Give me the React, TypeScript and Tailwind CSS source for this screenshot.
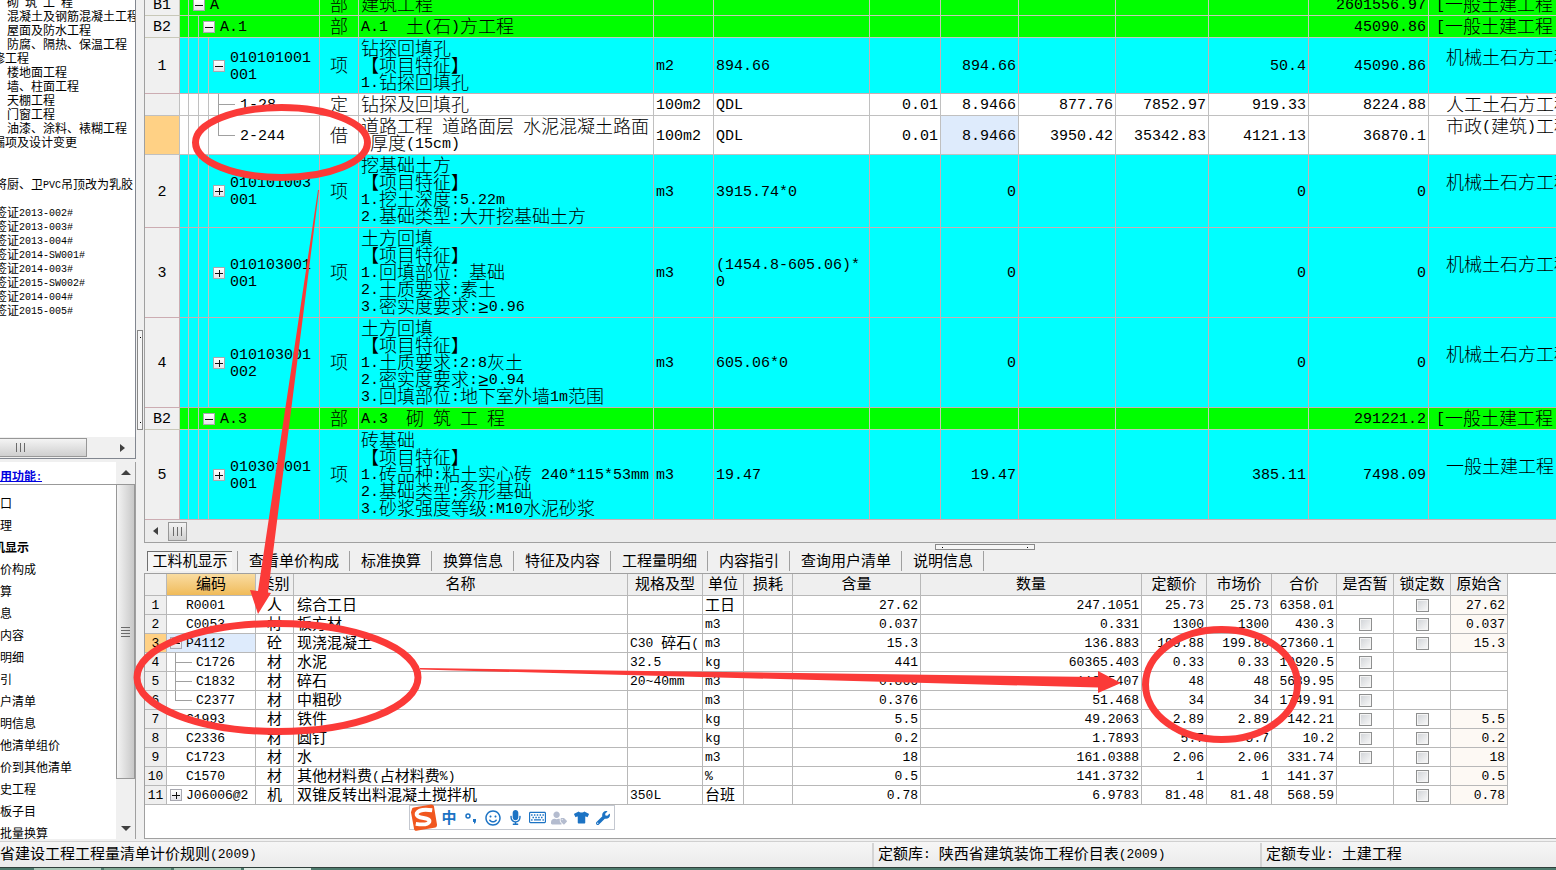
import { FaMicrophone, FaRegKeyboard, FaRegSmile, FaTshirt, FaUserTag, FaWrench } from "react-icons/fa";
import clsx from "clsx";

interface BillRow {
  no: string;
  level: number;
  open?: boolean;
  last?: boolean;
  code: string;
  kind: string;
  name: string;
  unit?: string;
  expr?: string;
  values: string[];
  major: string;
  height: string;
  selected?: boolean;
}

interface MaterialRow {
  code: string;
  depth?: number;
  open?: boolean;
  kind: string;
  name: string;
  spec?: string;
  unit: string;
  content: string;
  amount: string;
  price: string;
  total: string;
  temp: boolean;
  lock: boolean;
  origin: string;
}

const BILL_ROWS: BillRow[] = [
  { no: "B1", level: 1, open: true, code: "A", kind: "部", name: "建筑工程", values: ["", "", "", "", "", "2601556.97"], major: "[一般土建工程", height: "h-[22px]" },
  { no: "B2", level: 2, open: true, code: "A.1", kind: "部", name: "A.1  土(石)方工程", values: ["", "", "", "", "", "45090.86"], major: "[一般土建工程", height: "h-[22px]" },
  { no: "1", level: 3, open: true, code: "010101001\n001", kind: "项", name: "钻探回填孔\n【项目特征】\n1.钻探回填孔", unit: "m2", expr: "894.66", values: ["", "894.66", "", "", "50.4", "45090.86"], major: "机械土石方工程", height: "h-[56px]" },
  { no: "", level: 4, code: "1-28", kind: "定", name: "钻探及回填孔", unit: "100m2", expr: "QDL", values: ["0.01", "8.9466", "877.76", "7852.97", "919.33", "8224.88"], major: "人工土石方工程", height: "h-[22px]" },
  { no: "", level: 4, last: true, code: "2-244", kind: "借", name: "道路工程 道路面层 水泥混凝土路面\n 厚度(15cm)", unit: "100m2", expr: "QDL", values: ["0.01", "8.9466", "3950.42", "35342.83", "4121.13", "36870.1"], major: "市政(建筑)工程", height: "h-[39px]", selected: true },
  { no: "2", level: 3, open: false, code: "010101003\n001", kind: "项", name: "挖基础土方\n【项目特征】\n1.挖土深度:5.22m\n2.基础类型:大开挖基础土方", unit: "m3", expr: "3915.74*0", values: ["", "0", "", "", "0", "0"], major: "机械土石方工程", height: "h-[73px]" },
  { no: "3", level: 3, open: false, code: "010103001\n001", kind: "项", name: "土方回填\n【项目特征】\n1.回填部位: 基础\n2.土质要求:素土\n3.密实度要求:≥0.96", unit: "m3", expr: "(1454.8-605.06)*\n0", values: ["", "0", "", "", "0", "0"], major: "机械土石方工程", height: "h-[90px]" },
  { no: "4", level: 3, open: false, code: "010103001\n002", kind: "项", name: "土方回填\n【项目特征】\n1.土质要求:2:8灰土\n2.密实度要求:≥0.94\n3.回填部位:地下室外墙1m范围", unit: "m3", expr: "605.06*0", values: ["", "0", "", "", "0", "0"], major: "机械土石方工程", height: "h-[90px]" },
  { no: "B2", level: 2, open: true, code: "A.3", kind: "部", name: "A.3  砌 筑 工 程", values: ["", "", "", "", "", "291221.2"], major: "[一般土建工程", height: "h-[22px]" },
  { no: "5", level: 3, open: false, code: "010301001\n001", kind: "项", name: "砖基础\n【项目特征】\n1.砖品种:粘土实心砖 240*115*53mm\n2.基础类型:条形基础\n3.砂浆强度等级:M10水泥砂浆", unit: "m3", expr: "19.47", values: ["", "19.47", "", "", "385.11", "7498.09"], major: "一般土建工程", height: "h-[90px]" },
];

const MATERIALS: MaterialRow[] = [
  { code: "R0001", kind: "人", name: "综合工日", unit: "工日", content: "27.62", amount: "247.1051", price: "25.73", total: "6358.01", temp: false, lock: true, origin: "27.62" },
  { code: "C0053", kind: "材", name: "板方材", unit: "m3", content: "0.037", amount: "0.331", price: "1300", total: "430.3", temp: true, lock: true, origin: "0.037" },
  { code: "P4112", open: true, kind: "砼", name: "现浇混凝土", spec: "C30 碎石(", unit: "m3", content: "15.3", amount: "136.883", price: "199.88", total: "27360.1", temp: true, lock: true, origin: "15.3" },
  { code: "C1726", depth: 1, kind: "材", name: "水泥", spec: "32.5", unit: "kg", content: "441", amount: "60365.403", price: "0.33", total: "19920.5", temp: true, lock: false, origin: "" },
  { code: "C1832", depth: 1, kind: "材", name: "碎石", spec: "20~40mm", unit: "m3", content: "0.866", amount: "118.5407", price: "48", total: "5689.95", temp: true, lock: false, origin: "" },
  { code: "C2377", depth: 2, kind: "材", name: "中粗砂", unit: "m3", content: "0.376", amount: "51.468", price: "34", total: "1749.91", temp: true, lock: false, origin: "" },
  { code: "C1993", kind: "材", name: "铁件", unit: "kg", content: "5.5", amount: "49.2063", price: "2.89", total: "142.21", temp: true, lock: true, origin: "5.5" },
  { code: "C2336", kind: "材", name: "圆钉", unit: "kg", content: "0.2", amount: "1.7893", price: "5.7", total: "10.2", temp: true, lock: true, origin: "0.2" },
  { code: "C1723", kind: "材", name: "水", unit: "m3", content: "18", amount: "161.0388", price: "2.06", total: "331.74", temp: true, lock: true, origin: "18" },
  { code: "C1570", kind: "材", name: "其他材料费(占材料费%)", unit: "%", content: "0.5", amount: "141.3732", price: "1", total: "141.37", temp: false, lock: true, origin: "0.5" },
  { code: "J06006@2", open: false, kind: "机", name: "双锥反转出料混凝土搅拌机", spec: "350L", unit: "台班", content: "0.78", amount: "6.9783", price: "81.48", total: "568.59", temp: false, lock: true, origin: "0.78" },
];

const PROJECT_TREE = [
  { text: "砌 筑 工 程", indent: "ml-[7px]" },
  { text: "混凝土及钢筋混凝土工程", indent: "ml-[7px]" },
  { text: "屋面及防水工程", indent: "ml-[7px]" },
  { text: "防腐、隔热、保温工程", indent: "ml-[7px]" },
  { text: "修工程", indent: "-ml-[7px]" },
  { text: "楼地面工程", indent: "ml-[7px]" },
  { text: "墙、柱面工程", indent: "ml-[7px]" },
  { text: "天棚工程", indent: "ml-[7px]" },
  { text: "门窗工程", indent: "ml-[7px]" },
  { text: "油漆、涂料、裱糊工程", indent: "ml-[7px]" },
  { text: "漏项及设计变更", indent: "-ml-[7px]" },
  { text: "", indent: "" },
  { text: "", indent: "" },
  { text: "将厨、卫PVC吊顶改为乳胶", indent: "-ml-[5px]" },
  { text: "", indent: "" },
  { text: "签证2013-002#", indent: "-ml-[5px]" },
  { text: "签证2013-003#", indent: "-ml-[5px]" },
  { text: "签证2013-004#", indent: "-ml-[5px]" },
  { text: "签证2014-SW001#", indent: "-ml-[5px]" },
  { text: "签证2014-003#", indent: "-ml-[5px]" },
  { text: "签证2015-SW002#", indent: "-ml-[5px]" },
  { text: "签证2014-004#", indent: "-ml-[5px]" },
  { text: "签证2015-005#", indent: "-ml-[5px]" },
];

const FUNCTIONS = ["口", "理", "机显示", "价构成", "算", "息", "内容", "明细", "引", "户清单", "明信息", "他清单组价", "价到其他清单", "史工程", "板子目", "批量换算"];

const TABS = ["查看单价构成", "标准换算", "换算信息", "特征及内容", "工程量明细", "内容指引", "查询用户清单", "说明信息"];

const MATERIAL_HEADS = ["编码", "类别", "名称", "规格及型", "单位", "损耗", "含量", "数量", "定额价", "市场价", "合价", "是否暂", "锁定数", "原始含"];

// Chinese runs are set one step larger than the Latin ones so that one hanzi spans two columns
const SIZES = {
  lg: { base: "text-[15px]", han: "text-[18px] align-[-2px] font-light" },
  md: { base: "text-[13px]", han: "text-[15px] align-[-1px]" },
  sm: { base: "text-[10px]", han: "text-[12px] align-[-1px]" },
};

function Txt({ children, size = "md" }: { children: string; size?: keyof typeof SIZES }) {
  const s = SIZES[size];
  return (
    <span className={clsx("whitespace-pre", s.base)}>
      {children.split(/([\u2010-\uffff]+)/).map((run, i) =>
        i % 2 ? (
          <span key={i} className={clsx("leading-0", s.han)}>{run}</span>
        ) : (
          run
        )
      )}
    </span>
  );
}

function Expander({ open }: { open: boolean }) {
  return (
    <button
      aria-label={open ? "折叠" : "展开"}
      className="flex h-3 w-3 shrink-0 items-center justify-center border border-[#a8a8b0] bg-gradient-to-b from-white to-[#e4e4ea]"
    >
      <svg width="8" height="8" viewBox="0 0 8 8" stroke="#111" strokeWidth="1" shapeRendering="crispEdges">
        <path d={open ? "M0 4.5h8" : "M0 4.5h8M4.5 1v7"} />
      </svg>
    </button>
  );
}

function BillCode({ row }: { row: BillRow }) {
  const guides = Math.min(row.level, 3);
  return (
    <div className="flex h-full items-stretch">
      <div className="w-[9px] shrink-0 border-r border-[#c0c0c0]" />
      {guides > 1 && <div className="w-[10px] shrink-0 border-r border-[#c0c0c0]" />}
      {guides > 2 && <div className="w-[10px] shrink-0 border-r border-[#c0c0c0]" />}
      {row.level === 4 ? (
        <div className="flex w-[26px] shrink-0 flex-col pl-[9px]">
          <div className="flex-1 border-b border-l border-[#a0a0a0]" />
          <div className={clsx("flex-1", !row.last && "border-l border-[#a0a0a0]")} />
        </div>
      ) : (
        <div className="flex w-4 shrink-0 items-center pl-1">
          <Expander open={!!row.open} />
        </div>
      )}
      <div className="flex items-center pl-[5px] pt-0.5">
        <Txt size="lg">{row.code}</Txt>
      </div>
    </div>
  );
}

function BillTable() {
  return (
    <table className="-mt-[6px] w-full table-fixed border-separate border-spacing-0 text-[15px] leading-[17px]">
      <colgroup>
        <col className="w-[35px]" />
        <col className="w-[140px]" />
        <col className="w-[39px]" />
        <col className="w-[295px]" />
        <col className="w-[60px]" />
        <col className="w-[156px]" />
        <col className="w-[71px]" />
        <col className="w-[78px]" />
        <col className="w-[97px]" />
        <col className="w-[93px]" />
        <col className="w-[100px]" />
        <col className="w-[120px]" />
        <col />
      </colgroup>
      <tbody>
        {BILL_ROWS.map((row, i) => {
          const line = clsx(
            "overflow-hidden border-b",
            row.level < 3 ? "border-[#c8c8b8]" : row.level === 3 ? "border-[#ccacb2]" : "border-[#c0c0c0]",
            row.height
          );
          const fill = row.level < 3 ? "bg-[#00ff00]" : row.level === 3 ? "bg-[#00ffff]" : "bg-white";
          const cell = clsx(line, "border-r px-0 pb-0 pt-0.5");
          return (
            <tr key={i}>
              <th className={clsx(cell, "font-normal", row.selected ? "bg-[#ffd185]" : "bg-[#f0f0f0]")}>{row.no}</th>
              <td className={clsx(line, fill, "border-r p-0")}><BillCode row={row} /></td>
              <td className={clsx(cell, fill, "text-center")}><Txt size="lg">{row.kind}</Txt></td>
              <td className={clsx(cell, fill, "pl-0.5")}><Txt size="lg">{row.name}</Txt></td>
              <td className={clsx(cell, fill, "pl-0.5")}><Txt size="lg">{row.unit ?? ""}</Txt></td>
              <td className={clsx(cell, fill, "pl-0.5")}><Txt size="lg">{row.expr ?? ""}</Txt></td>
              {row.values.map((v, j) => (
                <td key={j} className={clsx(cell, "pr-0.5 text-right", row.selected && j === 1 ? "bg-[#deebfc]" : fill)}>{v}</td>
              ))}
              <td className={clsx(line, fill, "pb-0 pr-0 pt-0.5", row.level < 3 ? "pl-[7px]" : "pl-[17px]")}>
                <Txt size="lg">{row.level < 3 || row.height === "h-[22px]" ? row.major : row.major + "\n "}</Txt>
              </td>
            </tr>
          );
        })}
      </tbody>
    </table>
  );
}

function MaterialCode({ row }: { row: MaterialRow }) {
  if (row.depth) {
    return (
      <div className="flex h-[18px] pl-2">
        <div className="flex w-[17px] flex-col">
          <div className="flex-1 border-b border-l border-[#a0a0a0]" />
          <div className={clsx("flex-1", row.depth === 1 && "border-l border-[#a0a0a0]")} />
        </div>
        <span className="pl-1 pt-0.5">{row.code}</span>
      </div>
    );
  }
  return (
    <div className="flex h-[18px] items-center pl-[3px]">
      {row.open !== undefined ? <Expander open={row.open} /> : <div className="w-3" />}
      <span className="pl-1 pt-0.5">{row.code}</span>
    </div>
  );
}

function Check({ label }: { label: string }) {
  return (
    <input
      type="checkbox"
      aria-label={label}
      className="mx-auto block h-[13px] w-[13px] appearance-none border border-[#8e8f8f] bg-gradient-to-br from-[#cfd2d6] to-[#fafafa] shadow-[inset_0_0_0_1px_#f4f4f4]"
    />
  );
}

function MaterialTable() {
  const line = "h-[19px] overflow-hidden whitespace-nowrap border-b border-r border-[#b8b8b8]";
  const bare = clsx(line, "p-0");
  const cell = clsx(line, "px-0 pb-0 pt-0.5");
  const num = clsx(line, "pb-0 pl-0 pr-0.5 pt-0.5 text-right");
  return (
    <table className="w-[1363px] table-fixed border-separate border-spacing-0 text-[13px] leading-[16px]">
      <colgroup>
        <col className="w-[22px]" />
        <col className="w-[89px]" />
        <col className="w-[38px]" />
        <col className="w-[334px]" />
        <col className="w-[75px]" />
        <col className="w-[41px]" />
        <col className="w-[49px]" />
        <col className="w-[128px]" />
        <col className="w-[221px]" />
        <col className="w-[65px]" />
        <col className="w-[65px]" />
        <col className="w-[65px]" />
        <col className="w-[57px]" />
        <col className="w-[57px]" />
        <col className="w-[57px]" />
      </colgroup>
      <thead>
        <tr className="bg-[#efefef]">
          <th className="h-[22px] border-b border-r border-[#b8b8b8]" />
          {MATERIAL_HEADS.map((head, i) => (
            <th
              key={head}
              className={clsx(
                "overflow-hidden whitespace-nowrap border-b border-r border-[#b8b8b8] p-0 font-normal",
                i === 0 && "bg-gradient-to-b from-[#f9dca0] to-[#f0bb58]"
              )}
            >
              <Txt>{head}</Txt>
            </th>
          ))}
        </tr>
      </thead>
      <tbody>
        {MATERIALS.map((row, i) => (
          <tr key={row.code}>
            <th className={clsx(cell, "font-normal", i === 2 ? "bg-[#ffd185]" : "bg-[#efefef]")}>{i + 1}</th>
            <td className={clsx(bare, i === 2 && "bg-[#deebfc]")}><MaterialCode row={row} /></td>
            <td className={clsx(cell, "text-center")}><Txt>{row.kind}</Txt></td>
            <td className={clsx(cell, "pl-[3px]")}><Txt>{row.name}</Txt></td>
            <td className={clsx(cell, "pl-0.5")}><Txt>{row.spec ?? ""}</Txt></td>
            <td className={clsx(cell, "pl-0.5")}><Txt>{row.unit}</Txt></td>
            <td className={bare} />
            <td className={num}>{row.content}</td>
            <td className={num}>{row.amount}</td>
            <td className={num}>{row.price}</td>
            <td className={num}>{row.price}</td>
            <td className={num}>{row.total}</td>
            <td className={bare}>{row.temp && <Check label="是否暂估" />}</td>
            <td className={bare}>{row.lock && <Check label="锁定数量" />}</td>
            <td className={clsx(num, row.origin && "bg-[#fdf9f4]")}>{row.origin}</td>
          </tr>
        ))}
      </tbody>
    </table>
  );
}

function Arrow({ dir }: { dir: "left" | "right" | "up" | "down" }) {
  const d = {
    left: "M7 1v8L2 5z",
    right: "M3 1v8l5-4z",
    up: "M0 7h10L5 2z",
    down: "M0 3h10L5 8z",
  }[dir];
  return (
    <svg width="10" height="10" viewBox="0 0 10 10" fill="#404040">
      <path d={d} />
    </svg>
  );
}

function Grip({ vertical }: { vertical?: boolean }) {
  return (
    <svg width="11" height="11" viewBox="0 0 11 11" stroke="#6a6a6a" shapeRendering="crispEdges">
      <path d={vertical ? "M1 1.5h9M1 4.5h9M1 7.5h9M1 10.5h9" : "M1.5 1v9M5.5 1v9M9.5 1v9"} />
    </svg>
  );
}

function Sidebar() {
  return (
    <aside className="flex w-[136px] shrink-0 flex-col gap-[3px] overflow-hidden">
      <div className="flex h-[459px] shrink-0 flex-col overflow-hidden border-b border-r border-[#828790] bg-white">
        <ul className="-mt-[3px] flex-1 text-[10px] leading-[14px]">
          {PROJECT_TREE.map((node, i) => (
            <li key={i} className={clsx("h-[14px] whitespace-nowrap", node.indent)}>
              <Txt size="sm">{node.text}</Txt>
            </li>
          ))}
        </ul>
        <div className="flex h-[21px] items-center bg-[#f0f0f0]">
          <div className="flex h-[19px] w-[87px] items-center border border-l-0 border-[#979797] bg-gradient-to-b from-[#f4f4f4] to-[#cfcfcf] pl-[15px]">
            <Grip />
          </div>
          <button aria-label="向右" className="ml-auto pr-2"><Arrow dir="right" /></button>
        </div>
      </div>

      <div className="flex min-h-0 flex-1 border-r border-[#a0a0a0] bg-white">
        <nav className="min-w-0 flex-1 overflow-hidden text-[10px] leading-[22px]">
          <h2 className="h-[23px] border-b border-[#999] pt-[6px] font-bold leading-[20px] text-[#0000e0] underline">
            <Txt size="sm">用功能:</Txt>
          </h2>
          <ul className="pt-[9px]">
            {FUNCTIONS.map((name) => (
              <li key={name} className={clsx("h-[22px] whitespace-nowrap", name === "机显示" && "-ml-[7px] font-bold")}>
                <a href="#"><Txt size="sm">{name}</Txt></a>
              </li>
            ))}
          </ul>
        </nav>
        <div className="flex w-[19px] flex-col items-center bg-[#f0f0f0]">
          <button aria-label="向上" className="flex h-[22px] items-center"><Arrow dir="up" /></button>
          <div className="flex h-[295px] w-full items-center justify-center border border-[#979797] bg-gradient-to-r from-[#f4f4f4] to-[#c8c8c8]">
            <Grip vertical />
          </div>
          <button aria-label="向下" className="mt-auto flex h-[22px] items-center"><Arrow dir="down" /></button>
        </div>
      </div>
    </aside>
  );
}

function ImeBar() {
  return (
    <div className="absolute left-[264px] top-[231px] flex h-[25px] items-center border border-[#c4c8d0] bg-white text-[#1c73c4]">
      <svg className="-my-1 block" width="28" height="28" viewBox="0 0 29 28">
        <path d="M2 5 Q2 3 4 3 L22 0 Q25 0 25 3 L28 21 Q28 24 25 24 L8 27 Q4 28 4 24 L1 8Z" fill="#f1571f" />
        <path d="M23 6 Q10 4 7 9 Q6 13 14 14 Q21 15 20 18 Q18 22 6 20" fill="none" stroke="#fff" strokeWidth="4" />
      </svg>
      <button className="w-[22px] font-['Noto_Sans_CJK_SC',sans-serif] text-[15px] font-bold">中</button>
      <button aria-label="标点" className="flex w-[22px] justify-center">
        <svg width="14" height="14" viewBox="0 0 14 14">
          <circle cx="4" cy="5" r="2" fill="none" stroke="currentColor" strokeWidth="1.5" />
          <path d="M9 8h3v2q0 2-2 3v-2H9z" fill="currentColor" />
        </svg>
      </button>
      <button aria-label="表情" className="flex w-[22px] justify-center"><FaRegSmile size={16} /></button>
      <button aria-label="语音" className="flex w-[22px] justify-center"><FaMicrophone size={15} /></button>
      <button aria-label="软键盘" className="flex w-[22px] justify-center"><FaRegKeyboard size={17} /></button>
      <button aria-label="账户" className="flex w-[22px] justify-center text-[#b4bccf]"><FaUserTag size={16} /></button>
      <button aria-label="皮肤" className="flex w-[22px] justify-center"><FaTshirt size={15} /></button>
      <button aria-label="设置" className="flex w-[22px] justify-center"><FaWrench size={14} /></button>
    </div>
  );
}

function Annotations() {
  return (
    <svg className="pointer-events-none absolute inset-0 h-full w-full" fill="none" stroke="#fb3a38" strokeWidth="7">
      <ellipse cx="281.5" cy="142.5" rx="86" ry="35" />
      <ellipse cx="277.5" cy="677.5" rx="140.5" ry="54" />
      <ellipse cx="1221.5" cy="684.5" rx="76" ry="55" />
      <g fill="#fb3a38" stroke="none">
        <path d="M318 190h1L268 592.500l3 .5L258 614l-8-24 8 1z" />
        <path d="M420 668L1098 677v-6l23 12-23 10v-5.500L420 669.500z" />
      </g>
    </svg>
  );
}

export default function App() {
  return (
    <div className="relative flex h-screen flex-col overflow-hidden bg-[#f0f0f0] font-['Liberation_Mono','Noto_Sans_CJK_SC',monospace] text-black">
      <div className="flex min-h-0 flex-1">
        <Sidebar />
        <div className="w-2 shrink-0 px-px pt-[330px]">
          <div className="flex h-[100px] flex-col items-center justify-between border border-[#888] bg-[#f6f6f6] py-1.5">
            <span className="h-px w-px bg-black" />
            <span className="h-px w-px bg-black" />
          </div>
        </div>

        <main className="flex min-w-0 flex-1 flex-col">
          <section className="shrink-0 overflow-hidden border-b border-l border-[#a0a0a0]">
            <BillTable />
            <div className="flex h-[22px] items-center bg-[#ececec] pl-[6px]">
              <button aria-label="向左"><Arrow dir="left" /></button>
              <div className="ml-[7px] flex h-[19px] w-[19px] items-center justify-center border border-[#979797] bg-gradient-to-b from-[#f4f4f4] to-[#cfcfcf]">
                <Grip />
              </div>
            </div>
          </section>

          <div className="flex h-2 shrink-0 items-center">
            <div className="ml-[56%] flex h-1.5 w-[100px] items-center justify-between border border-[#888] bg-[#f6f6f6] px-1.5">
              <span className="h-px w-px bg-black" />
              <span className="h-px w-px bg-black" />
            </div>
          </div>

          <div className="flex h-[22px] shrink-0 items-start pl-[3px] text-[13px] leading-[20px]">
            <button className="h-[20px] w-[85px] border-l border-t border-[#707070] bg-[#f6f6f6] text-center">
              <Txt>工料机显示</Txt>
            </button>
            <div className="h-[20px] w-[6px] border-r border-[#a0a0a0]" />
            {TABS.map((tab) => (
              <button key={tab} className="h-[20px] border-r border-[#a0a0a0] pl-[11px] pr-[10px] pt-px">
                <Txt>{tab}</Txt>
              </button>
            ))}
          </div>

          <section className="relative min-h-0 flex-1 border-y border-l border-[#a0a0a0] bg-white">
            <MaterialTable />
            <ImeBar />
          </section>
        </main>
      </div>

      <footer className="shrink-0 pt-0.5">
        <div className="flex h-[26px] items-center border-t border-[#d0d0d0] bg-gradient-to-b from-[#f6f6f6] to-[#ebebeb] text-[13px]">
          <div className="h-[24px] flex-1 border-r-2 border-[#d4d4d4] leading-[24px]"><Txt>省建设工程工程量清单计价规则(2009)</Txt></div>
          <div className="h-[24px] w-[388px] border-r-2 border-[#d4d4d4] pl-1 leading-[24px]"><Txt>定额库: 陕西省建筑装饰工程价目表(2009)</Txt></div>
          <div className="h-[24px] w-[294px] pl-1 leading-[24px]"><Txt>定额专业: 土建工程</Txt></div>
        </div>
        <div className="flex h-[3px] gap-[3px] border-t border-[#30403c] bg-[#4d7a6c]">
          <div className="w-[31px] bg-[#4d7a6c]" />
          <div className="w-[67px] bg-[#a9c9b8]" />
          <div className="w-[67px] bg-[#7fa893]" />
          <div className="w-[67px] bg-[#a9c9b8]" />
          <div className="w-[67px] bg-[#dce9e2]" />
        </div>
      </footer>

      <Annotations />
    </div>
  );
}
